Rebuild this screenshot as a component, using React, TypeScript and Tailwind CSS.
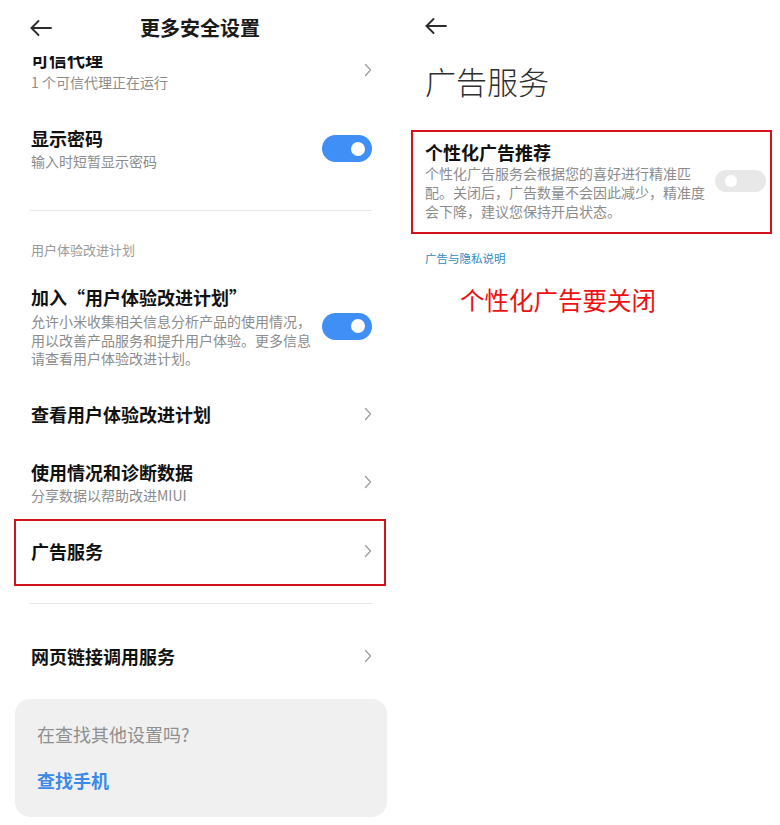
import React from 'react';

const font = { fontFamily: '"Noto Sans CJK SC", "Noto Sans", sans-serif' };

const BackArrow: React.FC = () => (
  <svg width="22" height="16" viewBox="0 0 22 16" fill="none" stroke="#2b2b2b" strokeWidth="1.8" strokeLinecap="round" strokeLinejoin="round">
    <path d="M21 8H1.5" />
    <path d="M8.5 1L1.5 8l7 7" />
  </svg>
);

const Chevron: React.FC = () => (
  <svg width="8" height="14" viewBox="0 0 8 14" fill="none" stroke="#9e9e9e" strokeWidth="1.3" strokeLinecap="round" strokeLinejoin="round">
    <path d="M1.5 1.5L6.5 7l-5 5.5" />
  </svg>
);

const Toggle: React.FC<{ on?: boolean }> = ({ on }) =>
  on ? (
    <div className="relative w-[50px] h-[27px] rounded-full bg-[#3f8ff6] flex-shrink-0">
      <div className="absolute right-[7px] top-[6.5px] w-[14px] h-[14px] rounded-full bg-white" />
    </div>
  ) : (
    <div className="relative w-[51px] h-[22px] rounded-full bg-[#e8e8e8] flex-shrink-0">
      <div className="absolute left-[10px] top-[5px] w-[12px] h-[12px] rounded-full bg-white" />
    </div>
  );

interface RowProps {
  title: string;
  sub?: string;
  right?: React.ReactNode;
}

const Row: React.FC<RowProps> = ({ title, sub, right }) => (
  <div className="flex items-center justify-between pl-[31px] pr-[28px] py-[17px]">
    <div className="min-w-0">
      <div className="text-[18px] leading-[24px] font-semibold text-[#111]">{title}</div>
      {sub && <div className="mt-[1px] text-[14px] leading-[20px] text-[#8c8c8c]">{sub}</div>}
    </div>
    <div className="flex items-center">{right ?? <Chevron />}</div>
  </div>
);

const Divider: React.FC = () => <div className="mx-[30px] mr-[28px] h-px bg-[#e6e6e6]" />;

const LeftPanel: React.FC = () => (
  <div className="w-[400px] flex flex-col bg-white">
    <div className="h-[56px] flex items-center pl-[30px] pr-[30px] bg-white">
      <BackArrow />
      <div className="flex-1 text-center text-[20px] font-semibold text-[#1a1a1a]">更多安全设置</div>
      <div className="w-[22px]" />
    </div>

    <div className="overflow-hidden">
      <div className="-mt-[26px]">
        <Row title="可信代理" sub="1 个可信代理正在运行" />
      </div>
    </div>
    <Row title="显示密码" sub="输入时短暂显示密码" right={<Toggle on />} />

    <div className="mt-[22px]">
      <Divider />
    </div>

    <div className="pl-[31px] mt-[30px] mb-[9px] text-[13px] leading-[18px] text-[#999]">用户体验改进计划</div>

    <div className="flex items-center justify-between pl-[31px] pr-[28px] py-[17px]">
      <div>
        <div className="text-[18px] leading-[24px] font-semibold text-[#111]">加入“用户体验改进计划”</div>
        <div className="mt-[3px] text-[14px] leading-[18.5px] text-[#8c8c8c] whitespace-nowrap">
          <div>允许小米收集相关信息分析产品的使用情况，</div>
          <div>用以改善产品服务和提升用户体验。更多信息</div>
          <div>请查看用户体验改进计划。</div>
        </div>
      </div>
      <Toggle on />
    </div>

    <Row title="查看用户体验改进计划" />
    <Row title="使用情况和诊断数据" sub="分享数据以帮助改进MIUI" />

    <div className="relative">
      <Row title="广告服务" />
      <div className="absolute left-[14px] right-[14px] top-[-3px] bottom-[-6px] border-2 border-[#d3121c] pointer-events-none" />
    </div>

    <div className="mt-[23px]">
      <Divider />
    </div>

    <div className="mt-[23px]">
      <Row title="网页链接调用服务" />
    </div>

    <div className="mx-[15px] mr-[13px] mt-[14px] rounded-[15px] bg-[#f0f0f0] pl-[22px] pt-[23px] pb-[25px]">
      <div className="text-[18px] leading-[24px] text-[#8f8f8f]">在查找其他设置吗?</div>
      <div className="mt-[22px] text-[18px] leading-[24px] font-semibold text-[#3b8ae6]">查找手机</div>
    </div>
  </div>
);

const RightPanel: React.FC = () => (
  <div className="w-[380px] flex flex-col bg-white pl-[25px] pr-[14px]">
    <div className="h-[52px] flex items-center">
      <BackArrow />
    </div>
    <div className="mt-[9px] text-[31px] leading-[40px] font-light text-[#2e2e2e]">广告服务</div>

    <div className="relative mt-[29px] pt-[10px] pb-[12.5px] flex items-center justify-between">
      <div>
        <div className="text-[18px] leading-[24px] font-semibold text-[#111]">个性化广告推荐</div>
        <div className="text-[14px] leading-[19px] text-[#8c8c8c] whitespace-nowrap">
          <div>个性化广告服务会根据您的喜好进行精准匹</div>
          <div>配。关闭后，广告数量不会因此减少，精准度</div>
          <div>会下降，建议您保持开启状态。</div>
        </div>
      </div>
      <Toggle />
      <div className="absolute left-[-14px] right-[-6px] top-0 bottom-0 border-2 border-[#d3121c] pointer-events-none" />
    </div>

    <div className="mt-[16px] text-[11.5px] leading-[16px] text-[#3189be]">广告与隐私说明</div>

    <div className="mt-[18px] ml-[35px] text-[24.5px] leading-[32px] text-[#ee1111]">个性化广告要关闭</div>
  </div>
);

export default function App() {
  return (
    <div className="w-[780px] h-[825px] flex bg-white overflow-hidden" style={font}>
      <LeftPanel />
      <RightPanel />
    </div>
  );
}
